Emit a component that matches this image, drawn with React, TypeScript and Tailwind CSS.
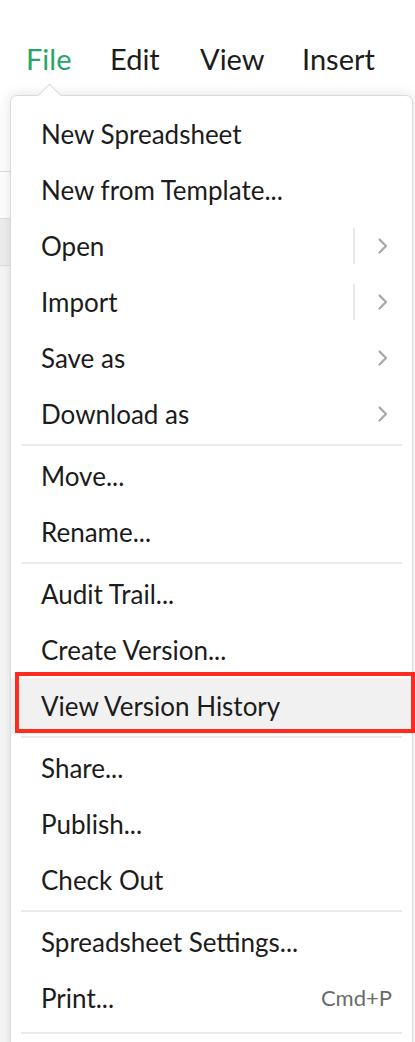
import React from 'react'

type Item = {
  label: string
  sub?: boolean
  split?: boolean
  shortcut?: string
  active?: boolean
}

const groups: Item[][] = [
  [
    { label: 'New Spreadsheet' },
    { label: 'New from Template...' },
    { label: 'Open', sub: true, split: true },
    { label: 'Import', sub: true, split: true },
    { label: 'Save as', sub: true },
    { label: 'Download as', sub: true }
  ],
  [{ label: 'Move...' }, { label: 'Rename...' }],
  [
    { label: 'Audit Trail...' },
    { label: 'Create Version...' },
    { label: 'View Version History', active: true }
  ],
  [{ label: 'Share...' }, { label: 'Publish...' }, { label: 'Check Out' }],
  [{ label: 'Spreadsheet Settings...' }, { label: 'Print...', shortcut: 'Cmd+P' }]
]

const Chevron = () => (
  <svg width="12" height="18" viewBox="0 0 12 18" fill="none">
    <path
      d="M2.5 2.5l6.5 6.5-6.5 6.5"
      stroke="#a6a6a6"
      strokeWidth="2.2"
      strokeLinecap="round"
      strokeLinejoin="round"
    />
  </svg>
)

const MenuRow = ({ item }: { item: Item }) => (
  <div
    className={`flex h-[56px] items-center pl-[30px] pr-[23px] ${
      item.active ? 'bg-[#f1f1f1]' : ''
    }`}
  >
    <span className="flex-1 text-[26px] leading-none text-[#1c1c1c]">{item.label}</span>
    {item.split && <span className="mr-[22px] h-[36px] w-[2px] bg-[#e8e8e8]" />}
    {item.sub && <Chevron />}
    {item.shortcut && (
      <span className="-mr-[3px] text-[22px] leading-none text-[#6b6b6b]">{item.shortcut}</span>
    )}
  </div>
)

const App = () => {
  return (
    <div
      className="relative h-[1042px] w-[415px] overflow-hidden bg-white"
      style={{ fontFamily: 'Lato, "Noto Sans", sans-serif' }}
    >
      {/* top menubar */}
      <div className="flex h-[95px] items-start pt-[44px] pl-[26px] text-[29px] leading-none text-[#1c1c1c]">
        <span className="w-[84px] text-[#27a567]">File</span>
        <span className="w-[90px]">Edit</span>
        <span className="w-[102px]">View</span>
        <span>Insert</span>
      </div>

      {/* sheet behind the menu */}
      <div className="flex w-[10px] flex-col">
        <div className="h-[76px] bg-white" />
        <div className="h-[1px] bg-[#dedede]" />
        <div className="h-[46px] bg-white" />
        <div className="h-[1px] bg-[#dedede]" />
        <div className="h-[46px] bg-[#efefef]" />
        <div className="h-[1px] bg-[#dedede]" />
        <div className="h-[800px] bg-[#f7f7f7]" />
      </div>

      {/* dropdown */}
      <div className="absolute left-[10px] top-[95px] w-[403px] rounded-[7px] border border-[#dadada] bg-white pt-[10px] shadow-[0_0_14px_rgba(0,0,0,0.12)]">
        <div className="absolute -top-[9px] left-[30px] h-[17px] w-[17px] rotate-45 border-l border-t border-[#dadada] bg-white" />
        {groups.map((group, gi) => (
          <div key={gi}>
            {gi > 0 && <div className="mx-[10px] mt-[2px] mb-[2px] h-[2px] bg-[#ebebeb]" />}
            {group.map((item) => (
              <MenuRow key={item.label} item={item} />
            ))}
          </div>
        ))}
        <div className="mx-[10px] mt-[6px] h-[2px] bg-[#ebebeb]" />
        <div className="h-[40px]" />
      </div>

      {/* highlight annotation */}
      <div className="absolute left-[15px] top-[672px] h-[61px] w-[400px] border-[4px] border-[#ff2b1f]" />
    </div>
  )
}

export default App
